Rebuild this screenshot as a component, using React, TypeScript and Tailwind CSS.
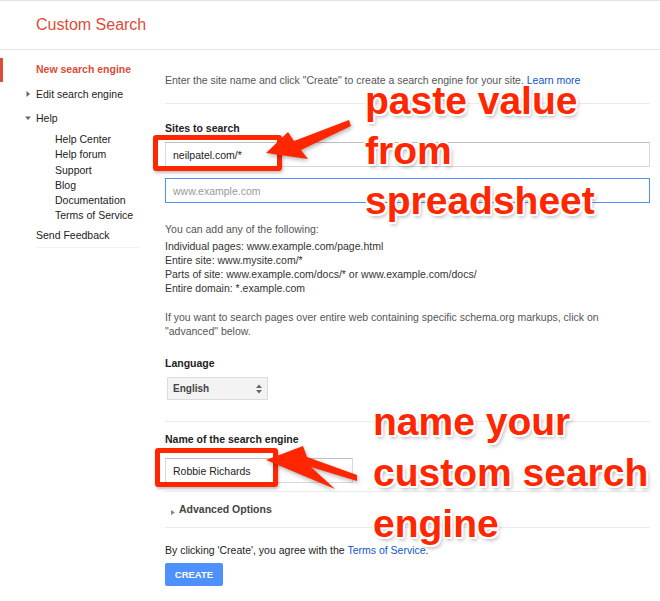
import React from 'react'

const Tri = ({ down = false }: { down?: boolean }) => (
  <svg width="6" height="6" viewBox="0 0 6 6" className="absolute left-[-11px] top-[9px]">
    {down ? <polygon points="0,1.5 6,1.5 3,5" fill="#666" /> : <polygon points="1.5,0 5,3 1.5,6" fill="#666" />}
  </svg>
)

const Sidebar = () => {
  return (
    <div className="w-[165px] shrink-0 text-[10.5px] text-[#222]">
      <div className="mt-[8px] flex h-[24px] items-center">
        <div className="h-[24px] w-[3px] bg-[#dd4b39]" />
        <span className="ml-[33px] font-bold text-[#dd4b39]">New search engine</span>
      </div>
      <div className="relative ml-[36px] h-[24px] leading-[24px]">
        <Tri />
        Edit search engine
      </div>
      <div className="relative ml-[36px] h-[24px] leading-[24px]">
        <Tri down />
        Help
      </div>
      <ul className="ml-[55px] mt-[2px] leading-[15.3px]">
        <li>Help Center</li>
        <li>Help forum</li>
        <li>Support</li>
        <li>Blog</li>
        <li>Documentation</li>
        <li>Terms of Service</li>
      </ul>
      <div className="ml-[36px] h-[23px] leading-[23px]">Send Feedback</div>
      <div className="ml-[36px] h-px w-[104px] bg-[#f0f0f0]" />
    </div>
  )
}

const Main = () => {
  return (
    <div className="w-[485px] text-[10.5px] leading-[14px] text-[#555]">
      <p className="mt-[23px]">
        Enter the site name and click "Create" to create a search engine for your site.{' '}
        <span className="text-[#15c]">Learn more</span>
      </p>
      <div className="mt-[16px] h-px bg-[#ebebeb]" />

      <h3 className="mt-[17px] font-bold text-[#222]">Sites to search</h3>
      <div className="mt-[7px] flex h-[25px] items-center border border-[#d9d9d9] border-t-[#c0c0c0] pl-[7px] text-[#222]">
        neilpatel.com/*
      </div>
      <div className="mt-[11px] flex h-[25px] items-center border border-[#4d90fe] pl-[7px] text-[#999]">
        www.example.com
      </div>

      <p className="mt-[19px]">You can add any of the following:</p>
      <ul className="mt-[3px] text-[#333]">
        <li>Individual pages: www.example.com/page.html</li>
        <li>Entire site: www.mysite.com/*</li>
        <li>Parts of site: www.example.com/docs/* or www.example.com/docs/</li>
        <li>Entire domain: *.example.com</li>
      </ul>
      <p className="mt-[15px]">
        If you want to search pages over entire web containing specific schema.org markups, click on
        <br />
        "advanced" below.
      </p>

      <h3 className="mt-[18px] font-bold text-[#222]">Language</h3>
      <div className="ml-[2px] mt-[7px] flex h-[23px] w-[101px] items-center justify-between border border-[#dcdcdc] bg-[#f3f3f3] pl-[5px] pr-[5px] text-[10px] font-bold text-[#444]">
        English
        <svg width="6" height="10" viewBox="0 0 6 10">
          <polygon points="0,4 6,4 3,0.5" fill="#666" />
          <polygon points="0,6 6,6 3,9.5" fill="#666" />
        </svg>
      </div>
      <div className="mt-[21px] h-px bg-[#ebebeb]" />

      <h3 className="mt-[10px] font-bold text-[#222]">Name of the search engine</h3>
      <div className="mt-[12px] flex h-[25px] w-[188px] items-center border border-[#d9d9d9] border-t-[#c0c0c0] pl-[7px] text-[#222]">
        Robbie Richards
      </div>
      <div className="mt-[8px] h-px bg-[#ebebeb]" />

      <div className="mt-[10px] flex items-center text-[10.5px] font-bold text-[#444]">
        <svg width="4" height="5" viewBox="0 0 4 5" className="ml-[6px] mr-[4px] mt-[6px]">
          <polygon points="0,0 4,2.5 0,5" fill="#888" />
        </svg>
        Advanced Options
      </div>
      <div className="mt-[11px] h-px bg-[#ebebeb]" />

      <p className="mt-[15px] text-[#222]">
        By clicking 'Create', you agree with the <span className="text-[#15c]">Terms of Service</span>.
      </p>
      <button className="mt-[6px] flex h-[23px] w-[58px] items-center justify-center rounded-[2px] bg-[#4d90fe] text-[9.5px] font-bold text-white">
        CREATE
      </button>
    </div>
  )
}

const callout =
  "[text-shadow:2px_0_0_#fff,-2px_0_0_#fff,0_2px_0_#fff,0_-2px_0_#fff,1.5px_1.5px_0_#fff,-1.5px_1.5px_0_#fff,1.5px_-1.5px_0_#fff,-1.5px_-1.5px_0_#fff,2px_3px_4px_rgba(0,0,0,0.35)]"

const Annotations = () => (
  <>
    <div className="absolute left-[153px] top-[135px] h-[36px] w-[129px] rounded-[3px] border-[5px] border-[#ff2600] shadow-[1px_2px_3px_rgba(0,0,0,0.25)]" />
    <div className="absolute left-[155px] top-[448px] h-[39px] w-[123px] rounded-[3px] border-[5px] border-[#ff2600] shadow-[1px_2px_3px_rgba(0,0,0,0.25)]" />
    <svg width="660" height="601" className="pointer-events-none absolute left-0 top-0 drop-shadow-[1px_2px_2px_rgba(0,0,0,0.3)]">
      <polygon points="266,153 288,132 294,141 349,120 351,126 301,150 308,159" fill="#ff2600" />
      <polygon points="266,460 303,446 307,457 357,475 357,481 311,467 335,489" fill="#ff2600" />
    </svg>
    <div className={`absolute left-[365px] top-[76px] text-[39px] font-bold leading-[50px] text-[#ff2600] ${callout}`}>
      paste value
      <br />
      from
      <br />
      spreadsheet
    </div>
    <div className={`absolute left-[373px] top-[396px] text-[39px] font-bold leading-[51px] text-[#ff2600] ${callout}`}>
      name your
      <br />
      custom search
      <br />
      engine
    </div>
  </>
)

const App = () => {
  return (
    <div className="relative h-[601px] w-[660px] overflow-hidden bg-white font-['Liberation_Sans',Arial,sans-serif]">
      <header className="flex h-[50px] items-center border-y border-[#e5e5e5] pl-[36px]">
        <h1 className="text-[16px] text-[#dd4b39]">Custom Search</h1>
      </header>
      <div className="flex">
        <Sidebar />
        <Main />
      </div>
      <Annotations />
    </div>
  )
}

export default App
